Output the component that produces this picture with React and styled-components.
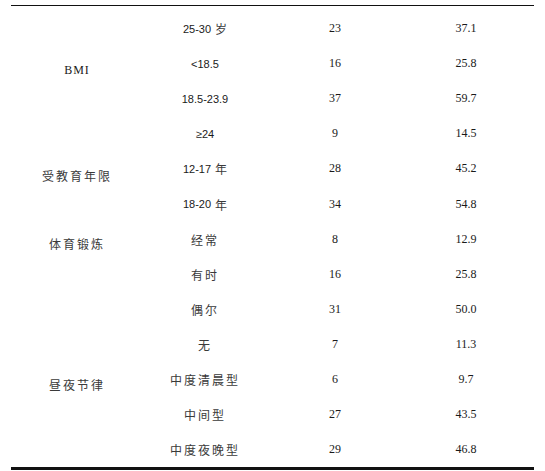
import React from "react";
import styled, { createGlobalStyle } from "styled-components";

const GlobalStyle = createGlobalStyle`
  body {
    margin: 0;
    background: #fff;
    color: #1a1a1a;
    font-family: "Liberation Serif", "Noto Sans CJK SC", serif;
  }
`;

const Table = styled.div`
  margin: 5px 0 0 11px;
  width: 523px;
  border-top: 1px solid #111;
  border-bottom: 3px solid #111;
  padding-top: 5px;
  display: grid;
  grid-template-columns: 132px 124px 136px 1fr;
  grid-auto-rows: 35.1px;
`;

const Label = styled.div`
  grid-column: 1;
  grid-row: ${(props) => props.$row};
  display: flex;
  align-items: center;
  justify-content: center;
  transform: translateY(${(props) => props.$shift || 0}px);
  font-size: 12px;
  letter-spacing: ${(props) => (props.$latin ? "1px" : "2px")};
  color: ${(props) => (props.$latin ? "#1a1a1a" : "#3a3a3a")};
  font-family: ${(props) =>
    props.$latin
      ? `"Liberation Serif", serif`
      : `"Noto Sans CJK SC", sans-serif`};
`;

const Cell = styled.div`
  grid-column: ${(props) => props.$col};
  display: flex;
  align-items: center;
  justify-content: center;
  padding-right: ${(props) => (props.$col === 4 ? "5px" : "0")};
  font-size: 12px;
  white-space: pre;
`;

const Category = styled(Cell)`
  font-family: "Liberation Sans", "Noto Sans CJK SC", sans-serif;
  font-size: 11px;
  letter-spacing: ${(props) => (props.$cjk ? "2px" : "0")};
  color: ${(props) => (props.$cjk ? "#3a3a3a" : "#1a1a1a")};
  font-size: ${(props) => (props.$cjk ? "12px" : "11px")};
`;

const Han = styled.span`
  font-family: "Noto Sans CJK SC", sans-serif;
  font-size: 12px;
  margin-left: 4px;
  color: #3a3a3a;
`;

const rows = [
  ["25-30", "岁", "23", "37.1"],
  ["<18.5", null, "16", "25.8"],
  ["18.5-23.9", null, "37", "59.7"],
  ["≥24", null, "9", "14.5"],
  ["12-17", "年", "28", "45.2"],
  ["18-20", "年", "34", "54.8"],
  ["经常", "cjk", "8", "12.9"],
  ["有时", "cjk", "16", "25.8"],
  ["偶尔", "cjk", "31", "50.0"],
  ["无", "cjk", "7", "11.3"],
  ["中度清晨型", "cjk", "6", "9.7"],
  ["中间型", "cjk", "27", "43.5"],
  ["中度夜晚型", "cjk", "29", "46.8"],
];

const labels = [
  { text: "BMI", row: 2, shift: 7, latin: true },
  { text: "受教育年限", row: 5, shift: 7 },
  { text: "体育锻炼", row: 7, shift: 4 },
  { text: "昼夜节律", row: 11, shift: 5 },
];

export default function App() {
  return (
    <>
      <GlobalStyle />
      <Table>
        {labels.map((l) => (
          <Label key={l.text} $row={l.row} $shift={l.shift} $latin={l.latin}>
            {l.text}
          </Label>
        ))}
        {rows.map(([cat, unit, n, pct], i) => (
          <React.Fragment key={i}>
            <Category $col={2} $cjk={unit === "cjk"} style={{ gridRow: i + 1 }}>
              {cat}
              {unit && unit !== "cjk" && <Han>{unit}</Han>}
            </Category>
            <Cell $col={3} style={{ gridRow: i + 1 }}>
              {n}
            </Cell>
            <Cell $col={4} style={{ gridRow: i + 1 }}>
              {pct}
            </Cell>
          </React.Fragment>
        ))}
      </Table>
    </>
  );
}
